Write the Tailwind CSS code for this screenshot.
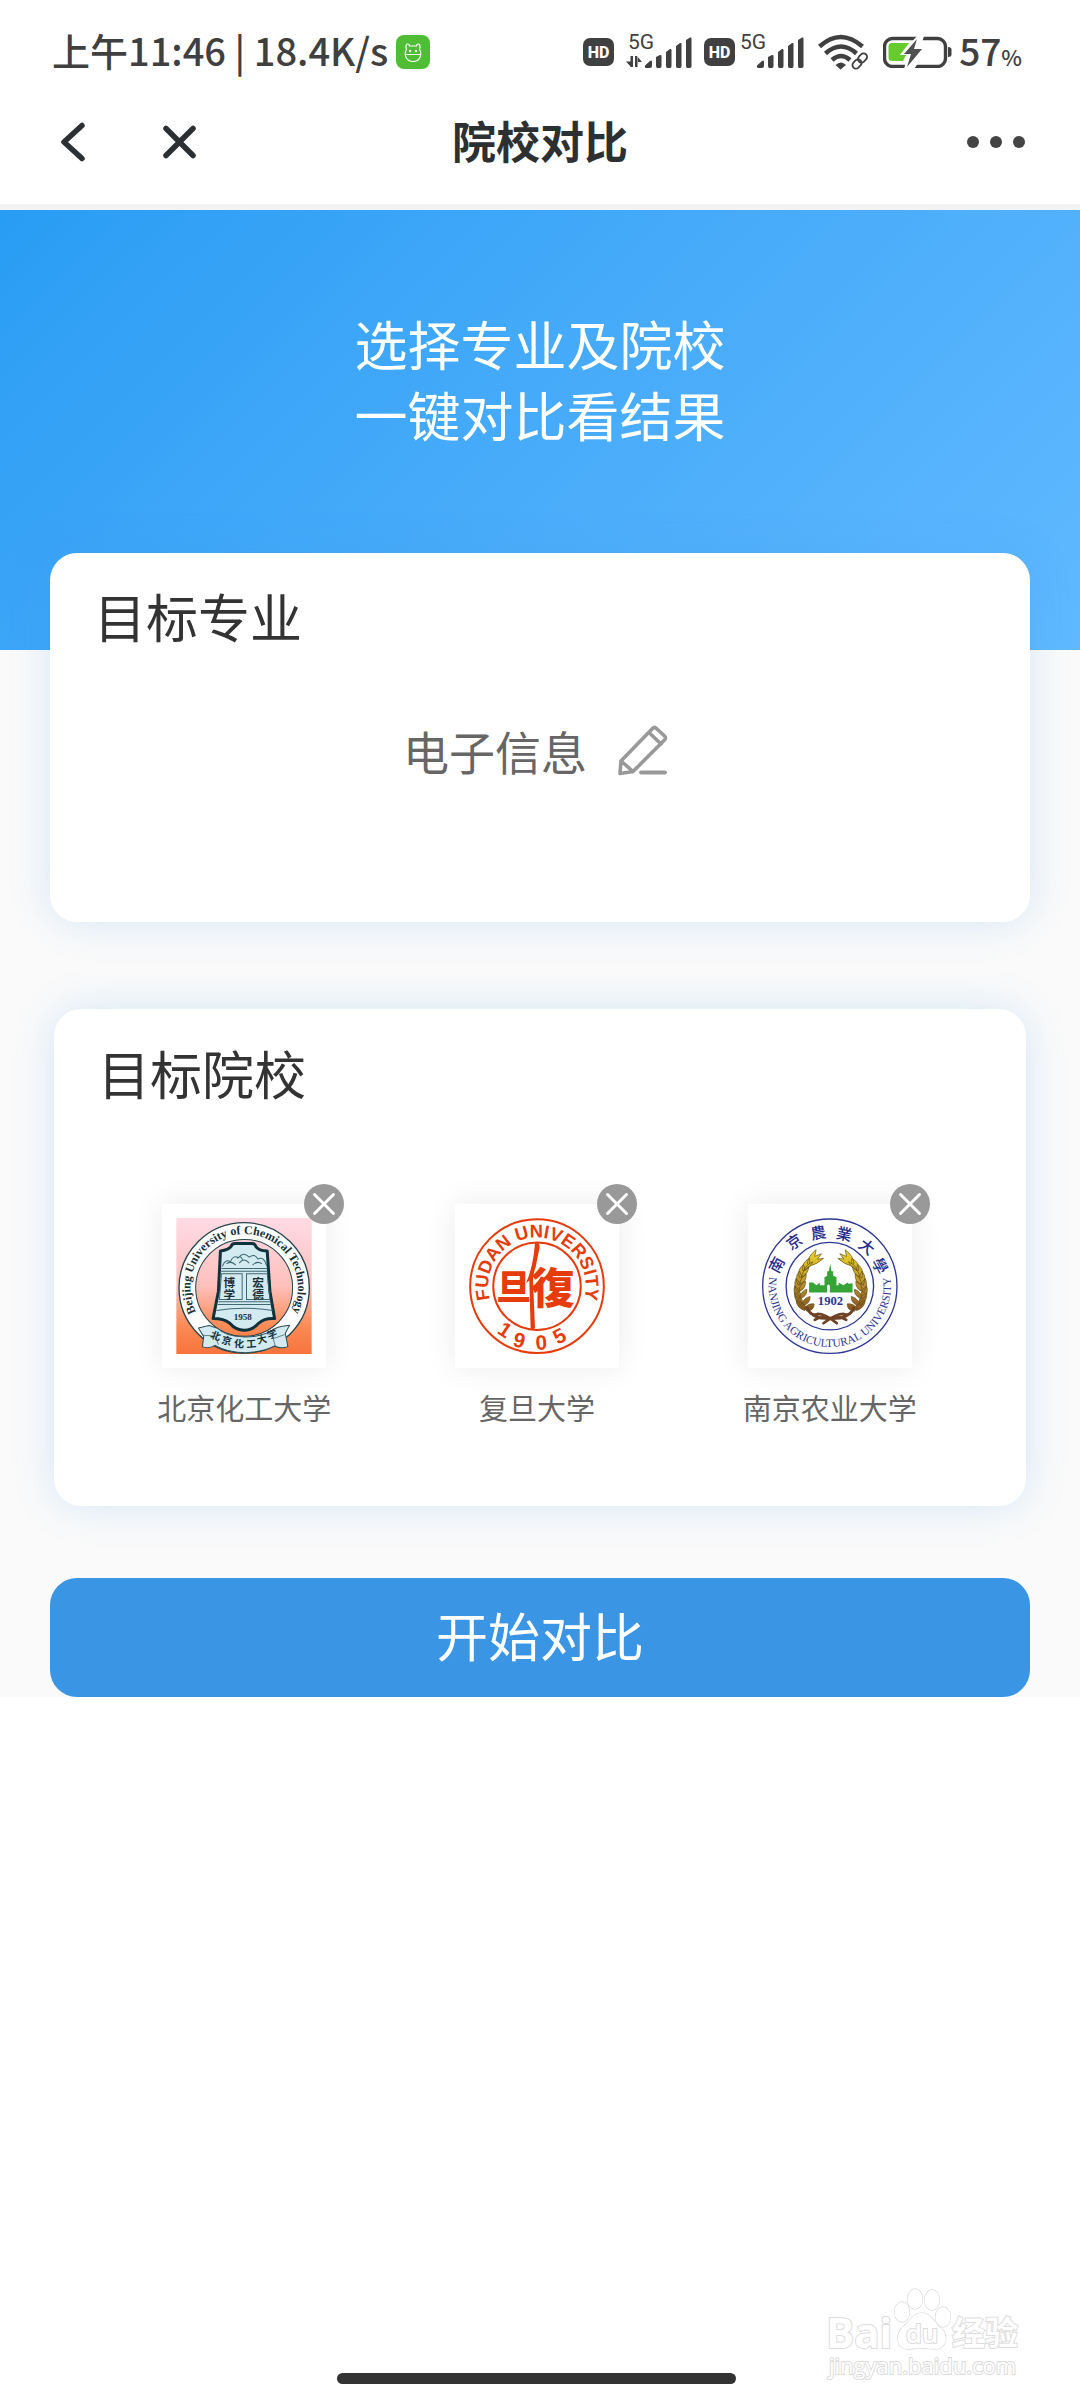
<!DOCTYPE html>
<html lang="zh-CN">
<head>
<meta charset="utf-8">
<meta name="viewport" content="width=device-width, initial-scale=1">
<title>院校对比</title>
<script src="https://cdn.jsdelivr.net/npm/@tailwindcss/browser@4"></script>
</head>
<body class="relative flex min-h-screen flex-col bg-white font-['Noto_Sans_CJK_SC',sans-serif] text-[#333]">

<header class="border-b-[6px] border-[#f3f3f3] bg-white pb-6">
  <!-- status bar -->
  <div class="flex h-[104px] items-center justify-between pr-[58px] pl-[52px] text-[#404040]">
    <div class="flex items-center gap-2">
      <span class="pb-1 text-[38px] leading-none font-medium whitespace-nowrap">上午11:46 | 18.4K/s</span>
      <svg class="size-[34px]" viewBox="0 0 34 34" fill="none" stroke="#fff" stroke-width="1.2">
        <rect width="34" height="34" rx="8" fill="#50bd37" stroke="none"/>
        <path d="M10.500 14.500C7.500 19 10 26.500 17 26.500S26.500 19 23.500 14.500M10.500 14.500c-1-3-.5-5.500 1-5.500s2 .8 2 2h7c0-1.200.5-2 2-2s2 2.500 1 5.500M9.500 19.500h15"/>
        <circle cx="14" cy="16" r=".6" fill="#fff"/><circle cx="20" cy="16" r=".6" fill="#fff"/>
      </svg>
    </div>
    <div class="flex items-center">
      <svg class="h-[52px] w-[224px]" viewBox="581 26 224 52" fill="#404040" font-family="Roboto,sans-serif">
        <rect x="582" y="38" width="31" height="28" rx="7"/>
        <text x="597.500" y="57.500" font-size="16" font-weight="800" fill="#fff" text-anchor="middle">HD</text>
        <text x="627" y="48.500" font-size="21">5G</text>
        <path d="M629.500 56h2.500v11h-2.500zM625 61.500h5V67zM634 56h2.500v11H634zM636 56v6h5z"/>
        <path d="M644 65.500l5-4.500q2-1 2 .5v4.500q0 2-2 2h-4q-1.500 0-1-2.500zM655 57l4-2q1.500-.5 1.500 1v10q0 2-1.500 2h-2.500q-1.500 0-1.500-2zM665 52l4-3q1.500-.5 1.500 1v16q0 2-1.500 2h-2.500q-1.500 0-1.500-2zM675 46l4-3q1.500-.5 1.500 1v22q0 2-1.500 2h-2.500q-1.500 0-1.500-2zM685 40l4-2.500q1.500-.5 1.500 1V66q0 2-1.500 2h-2.500q-1.500 0-1.500-2z"/>
        <rect x="703" y="38" width="31" height="28" rx="7"/>
        <text x="718.500" y="57.500" font-size="16" font-weight="800" fill="#fff" text-anchor="middle">HD</text>
        <text x="739" y="48.500" font-size="21">5G</text>
        <path transform="translate(112 0)" d="M644 65.500l5-4.500q2-1 2 .5v4.500q0 2-2 2h-4q-1.500 0-1-2.500zM655 57l4-2q1.500-.5 1.500 1v10q0 2-1.500 2h-2.500q-1.500 0-1.500-2zM665 52l4-3q1.500-.5 1.500 1v16q0 2-1.500 2h-2.500q-1.500 0-1.500-2zM675 46l4-3q1.500-.5 1.500 1v22q0 2-1.500 2h-2.500q-1.500 0-1.500-2zM685 40l4-2.500q1.500-.5 1.500 1V66q0 2-1.500 2h-2.500q-1.500 0-1.500-2z"/>
      </svg>
      <svg class="ml-3 h-9 w-[51px]" viewBox="817 35 51 36" fill="none" stroke="#404040" stroke-width="4.500">
        <path d="M818.500 47.500q21-19 43 0M824.500 54.500q15.500-14 31 0M831 61q9-8 18 0"/>
        <path d="M834.500 66q5.500-5 10.500 0l-5.500 4.500z" fill="#404040" stroke="none"/>
        <g stroke-width="1.800"><rect x="856.500" y="55.500" width="10" height="7" rx="3.500" transform="rotate(-45 861.500 59)"/><rect x="851" y="61.500" width="10" height="7" rx="3.500" transform="rotate(-45 856 65)"/></g>
      </svg>
      <svg class="ml-[14px] h-8 w-[70px]" viewBox="882 36 70 32">
        <rect x="883.500" y="38.500" width="61" height="28" rx="8" fill="none" stroke="#404040" stroke-width="3.400"/>
        <path d="M891 43h17l-9 12h6l-3 6h-11q-3.500 0-3.500-3.500v-11q0-3.500 3.500-3.500z" fill="#66cb2c"/>
        <path d="M916 36l-17 19h8l-4 14h10l14-20h-8l4-13z" fill="#fff"/>
        <path d="M916 39l-13 15h7l-4 13 15-18h-8z" fill="#505050"/>
        <path d="M947 47q3.500 0 3.500 2.500v5q0 2.500-3.500 2.500z" fill="#404040"/>
      </svg>
      <span class="ml-[6px] pb-1 text-[37px] leading-none font-medium">57<span class="text-[22px]">%</span></span>
    </div>
  </div>
  <!-- title bar -->
  <nav class="grid h-[76px] grid-cols-3 items-center px-[55px]">
    <div class="flex items-center gap-[66px]">
      <button type="button" aria-label="返回" class="flex">
        <svg class="size-10" viewBox="0 0 40 40" fill="none" stroke="#2c3033" stroke-width="5.500" stroke-linecap="round" stroke-linejoin="round"><path d="M27 3.500 9 20 27 36.500"/></svg>
      </button>
      <button type="button" aria-label="关闭" class="flex">
        <svg class="size-9" viewBox="0 0 36 36" fill="none" stroke="#2c3033" stroke-width="5.500" stroke-linecap="round"><path d="M5 4.500l27 27M32 4.500l-27 27"/></svg>
      </button>
    </div>
    <h1 class="pb-1 text-center text-[44px] leading-none font-bold text-[#2c3033]">院校对比</h1>
    <button type="button" aria-label="更多" class="flex gap-[11px] justify-self-end">
      <span class="size-3 rounded-full bg-[#444]"></span><span class="size-3 rounded-full bg-[#444]"></span><span class="size-3 rounded-full bg-[#444]"></span>
    </button>
  </nav>
</header>

<main class="bg-[#fafafa]">
  <section class="h-[440px] bg-linear-135 from-[#289df4] to-[#60b9ff] pt-[98px] text-center text-[53px] leading-[71px] text-white">
    <p>选择专业及院校</p>
    <p>一键对比看结果</p>
  </section>

  <section class="mx-[50px] -mt-[97px] rounded-[27px] bg-white pt-[27px] pb-[142px] shadow-[0_0_42px_rgba(60,150,230,0.19)]">
    <h2 class="pl-11 text-[52px] leading-[72px]">目标专业</h2>
    <div class="mt-[68px] flex h-[60px] items-center justify-center gap-[30px] pr-2">
      <span class="text-[46px] leading-[60px] text-[#666]">电子信息</span>
      <button type="button" aria-label="修改专业" class="flex">
        <svg class="size-[52px]" viewBox="0 0 52 52" fill="none" stroke="#999" stroke-width="3.600" stroke-linejoin="round" stroke-linecap="round">
          <path d="M3 49.500 4 37 35.500 4.500q2-2 4 0L47.500 12q2 2 0 4L16 47.500zM4 37l12 10.500M32 8.500l12 11.500"/><path d="M24 48.500h24" stroke-width="3.800"/>
        </svg>
      </button>
    </div>
  </section>

  <section class="mx-[54px] mt-[87px] rounded-[27px] bg-white pt-7 pb-[78px] shadow-[0_0_42px_rgba(60,150,230,0.19)]">
    <h2 class="pl-11 text-[52px] leading-[72px]">目标院校</h2>
    <ul class="mt-[95px] mr-[50px] ml-[44px] grid grid-cols-3">
      <li class="flex flex-col items-center">
        <div class="relative bg-white p-[14px] shadow-[0_0_30px_rgba(0,0,0,0.08)]">
          <svg class="size-[136px]" viewBox="108 141 405 407" role="img" aria-label="北京化工大学校徽">
            <defs>
              <linearGradient id="dusk" x1="0" y1="0" x2="0" y2="1"><stop offset="0" stop-color="#ffdbe6"/><stop offset=".5" stop-color="#fdc0bb"/><stop offset=".8" stop-color="#fb8a55"/><stop offset="1" stop-color="#f8733c"/></linearGradient>
              <path id="ring1" d="M190 456A161 161 0 1 1 432 456"/>
            </defs>
            <rect x="108" y="141" width="405" height="407" fill="url(#dusk)"/>
            <circle cx="311" cy="350" r="170" fill="none" stroke="#fff" stroke-width="48"/>
            <circle cx="311" cy="350" r="195" fill="none" stroke="#25464e" stroke-width="4"/>
            <circle cx="311" cy="350" r="145" fill="none" stroke="#25464e" stroke-width="3"/>
            <text font-family="Liberation Serif,serif" font-size="36" font-weight="700" fill="#17323a" text-anchor="middle"><textPath href="#ring1" startOffset="50%">Beijing University of Chemical Technology</textPath></text>
            <path d="M240 240q25-4 32-14 2-9 12-9h50q10 0 12 9 7 12 34 14l8 120 14 82q-30-2-48 14-18 21-43 21t-43-21q-18-14-50-14l16-82z" fill="#d2eaf0" stroke="#0f323c" stroke-width="9" stroke-linejoin="round"/>
            <path d="M243 292h137M240 300h142M234 392h156M232 400h160M243 308h62v77h-68zM318 308h62l8 77h-70zM228 418q84-14 168 0M246 286q8-24 24-14 8-22 24-12 14-20 32-2 16-12 26 6 18-10 26 20M258 278q16-10 28 4M296 276q14-18 30 0M336 282q14-14 28-4M290 262q10-12 16 4" fill="none" stroke="#3e6a74" stroke-width="3"/>
            <g font-family="Noto Sans CJK SC,sans-serif" font-weight="700" fill="#17323a" text-anchor="middle">
              <text font-size="35" x="267 267" y="347 383">博学</text>
              <text font-size="35" x="353 353" y="347 383">宏德</text>
              <text font-size="27" font-family="Liberation Serif,serif" x="307" y="446">1958</text>
            </g>
            <path d="M174 470l32-7q10 3 25 8 25 26 82 26t88-24q12-6 24-8l22-3-13 24 8 40q-22 8-40-2-34 18-86 20-54 0-92-22-20 12-38 4l4-30z" fill="#d2eaf0" stroke="#2b4f57" stroke-width="3" stroke-linejoin="round"/>
            <path d="M188 492l36 2 10 26M404 524l-6-22 34-12" fill="none" stroke="#2b4f57" stroke-width="2"/>
            <text font-family="Noto Sans CJK SC,sans-serif" font-weight="700" font-size="30" fill="#17323a" x="208 242 280 318 352 384" y="499 515 527 529 518 504" rotate="20 14 4 -4 -12 -20">北京化工大学</text>
          </svg>
          <button type="button" aria-label="移除北京化工大学" class="absolute -top-5 -right-[18px] flex size-10 items-center justify-center rounded-full bg-[#999]">
            <svg class="size-6" viewBox="0 0 24 24" stroke="#fff" stroke-width="3" stroke-linecap="round"><path d="M2.500 2.500l19 19M21.500 2.500l-19 19"/></svg>
          </button>
        </div>
        <span class="mt-[18px] text-[29px] leading-[42px] text-[#666]">北京化工大学</span>
      </li>
      <li class="flex flex-col items-center">
        <div class="relative bg-white p-[14px] shadow-[0_0_30px_rgba(0,0,0,0.08)]">
          <svg class="size-[136px]" viewBox="115 141 406 407" role="img" aria-label="复旦大学校徽" fill="#e63c0c">
            <defs><path id="ring2" d="M202 434A146 146 0 1 1 434 434"/></defs>
            <circle cx="318" cy="345" r="200" fill="none" stroke="#e63c0c" stroke-width="6"/>
            <circle cx="318" cy="345" r="131" fill="none" stroke="#e63c0c" stroke-width="6"/>
            <text font-family="Liberation Sans,sans-serif" font-size="55" font-weight="700" text-anchor="middle"><textPath href="#ring2" startOffset="50%">FUDAN UNIVERSITY</textPath></text>
            <text font-family="Liberation Sans,sans-serif" font-size="62" font-weight="700" x="196 243 315 380" y="484 523 536 521" rotate="34 14 -4 -28">1905</text>
            <g font-family="Noto Sans CJK SC,sans-serif" font-weight="900" text-anchor="middle"><text x="248" y="386" font-size="104">旦</text><text x="366" y="398" font-size="130">復</text></g>
            <path d="M312 216q14-4 14 12l-12 60q-8 20-8 40l6 142q-8 8-13 0l-4-142-10 8q22-50 27-120z"/>
          </svg>
          <button type="button" aria-label="移除复旦大学" class="absolute -top-5 -right-[18px] flex size-10 items-center justify-center rounded-full bg-[#999]">
            <svg class="size-6" viewBox="0 0 24 24" stroke="#fff" stroke-width="3" stroke-linecap="round"><path d="M2.500 2.500l19 19M21.500 2.500l-19 19"/></svg>
          </button>
        </div>
        <span class="mt-[18px] text-[29px] leading-[42px] text-[#666]">复旦大学</span>
      </li>
      <li class="flex flex-col items-center">
        <div class="relative bg-white p-[14px] shadow-[0_0_30px_rgba(0,0,0,0.08)]">
          <svg class="size-[136px]" viewBox="123 141 405 407" role="img" aria-label="南京农业大学校徽">
            <defs>
              <path id="ring3" d="M143 325A183 183 0 1 0 507 325"/>
              <linearGradient id="grain" gradientUnits="userSpaceOnUse" x1="0" y1="240" x2="0" y2="430"><stop offset="0" stop-color="#ead32c"/><stop offset=".5" stop-color="#bd952b"/><stop offset="1" stop-color="#7b4a22"/></linearGradient>
              <g id="ear" fill="url(#grain)" stroke="#604a14" stroke-width="2" stroke-linejoin="round">
                <path d="M250 418q-24-8-26-30 22 4 32 22zM238 402q-22-16-18-38 18 8 24 28zM232 384q-20-18-12-40 16 12 18 30zM230 364q-16-20-6-42 16 16 14 34zM230 342q-12-24 4-42 12 18 8 34zM234 320q-8-24 12-40 8 20 2 34zM244 298q-4-24 20-36 4 20-8 34zM258 278q0-22 26-42l-4 20 20-8-12 16 18-2q-20 18-40 22z"/>
                <path d="M256 420q22-2 22-22-18-2-28 12zM246 402q20-4 20-26-18 4-22 18zM238 382q20-8 18-28-16 6-20 20zM236 360q18-10 16-30-16 8-18 22zM238 340q18-10 16-32-16 12-18 24zM242 318q18-10 20-32-18 12-20 24zM250 298q16-8 24-26-18 8-24 20z"/>
              </g>
            </defs>
            <circle cx="325" cy="345" r="201" fill="none" stroke="#2e3791" stroke-width="4"/>
            <circle cx="325" cy="345" r="131" fill="none" stroke="#2e3791" stroke-width="4"/>
            <use href="#ear"/><use href="#ear" transform="matrix(-1 0 0 1 655 0)"/>
            <path d="M258 410q8 26 30 18 24 0 58 28M396 410q-8 26-30 18-24 0-60 28M262 420q26 28 68 20 24-8 44 6M392 420q-26 28-68 20-24-8-44 6" fill="none" stroke="#6f4326" stroke-width="8" stroke-linecap="round"/>
            <path d="M263 334h12l10 8 10-8v8h14v-24l8-4v-14h5l4-22 4 22h5v14l10 4v24h6v-8l15 8 12-8 3 4 12-2v28h-68v-20q-4-8-8 0v20h-54z" fill="#36a336"/>
            <text font-family="Liberation Serif,serif" font-weight="700" font-size="38" x="327" y="402" fill="#2e3791" text-anchor="middle">1902</text>
            <text font-family="Liberation Serif,serif" font-size="34" fill="#2e3791" text-anchor="middle"><textPath href="#ring3" startOffset="50%">NANJING AGRICULTURAL UNIVERSITY</textPath></text>
            <text font-family="Noto Sans CJK SC,sans-serif" font-weight="500" font-size="46" fill="#1f2a8c" x="170 209 271 342 407 449" y="309 239 206 201 226 272" rotate="-62 -34 -10 12 38 62">南京農業大學</text>
          </svg>
          <button type="button" aria-label="移除南京农业大学" class="absolute -top-5 -right-[18px] flex size-10 items-center justify-center rounded-full bg-[#999]">
            <svg class="size-6" viewBox="0 0 24 24" stroke="#fff" stroke-width="3" stroke-linecap="round"><path d="M2.500 2.500l19 19M21.500 2.500l-19 19"/></svg>
          </button>
        </div>
        <span class="mt-[18px] text-[29px] leading-[42px] text-[#666]">南京农业大学</span>
      </li>
    </ul>
  </section>

  <div class="mt-[72px] px-[50px]">
    <button type="button" class="block h-[119px] w-full rounded-[27px] bg-[#3b95e5] pb-[6px] text-[52px] leading-[72px] text-white">开始对比</button>
  </div>
</main>

<footer class="relative mt-auto flex justify-center pr-[7px] pb-4">
  <div class="h-[11px] w-[399px] rounded-full bg-[#333]"></div>
  <svg class="absolute right-[56px] bottom-[18px] h-24 w-[198px]" viewBox="826 2282 198 96" fill="#fff" stroke="#dcdcdc" stroke-width="2" paint-order="stroke" role="img" aria-label="百度经验">
    <g font-family="Open Sans,sans-serif">
      <text x="826" y="2344" font-size="42" font-weight="700">Bai</text>
      <g stroke-width="1.300"><ellipse cx="902" cy="2308" rx="7.500" ry="10"/><ellipse cx="915" cy="2295" rx="7.500" ry="10"/><ellipse cx="932" cy="2296" rx="7.500" ry="10"/><ellipse cx="943" cy="2313" rx="7.500" ry="10"/>
      <path d="M922 2309c10 0 12 10 19 15 8 7 6 21-6 21-6 0-8-1-13-1s-9 1-14 1c-12 0-13-15-5-22 7-5 9-14 19-14z"/></g>
      <text x="922" y="2339" font-size="26" font-weight="600" text-anchor="middle">du</text>
      <text x="952" y="2341" font-size="33" font-weight="700" font-family="Noto Sans CJK SC,sans-serif">经验</text>
      <text x="829" y="2370" font-size="22">jingyan.baidu.com</text>
    </g>
  </svg>
</footer>
</body>
</html>
